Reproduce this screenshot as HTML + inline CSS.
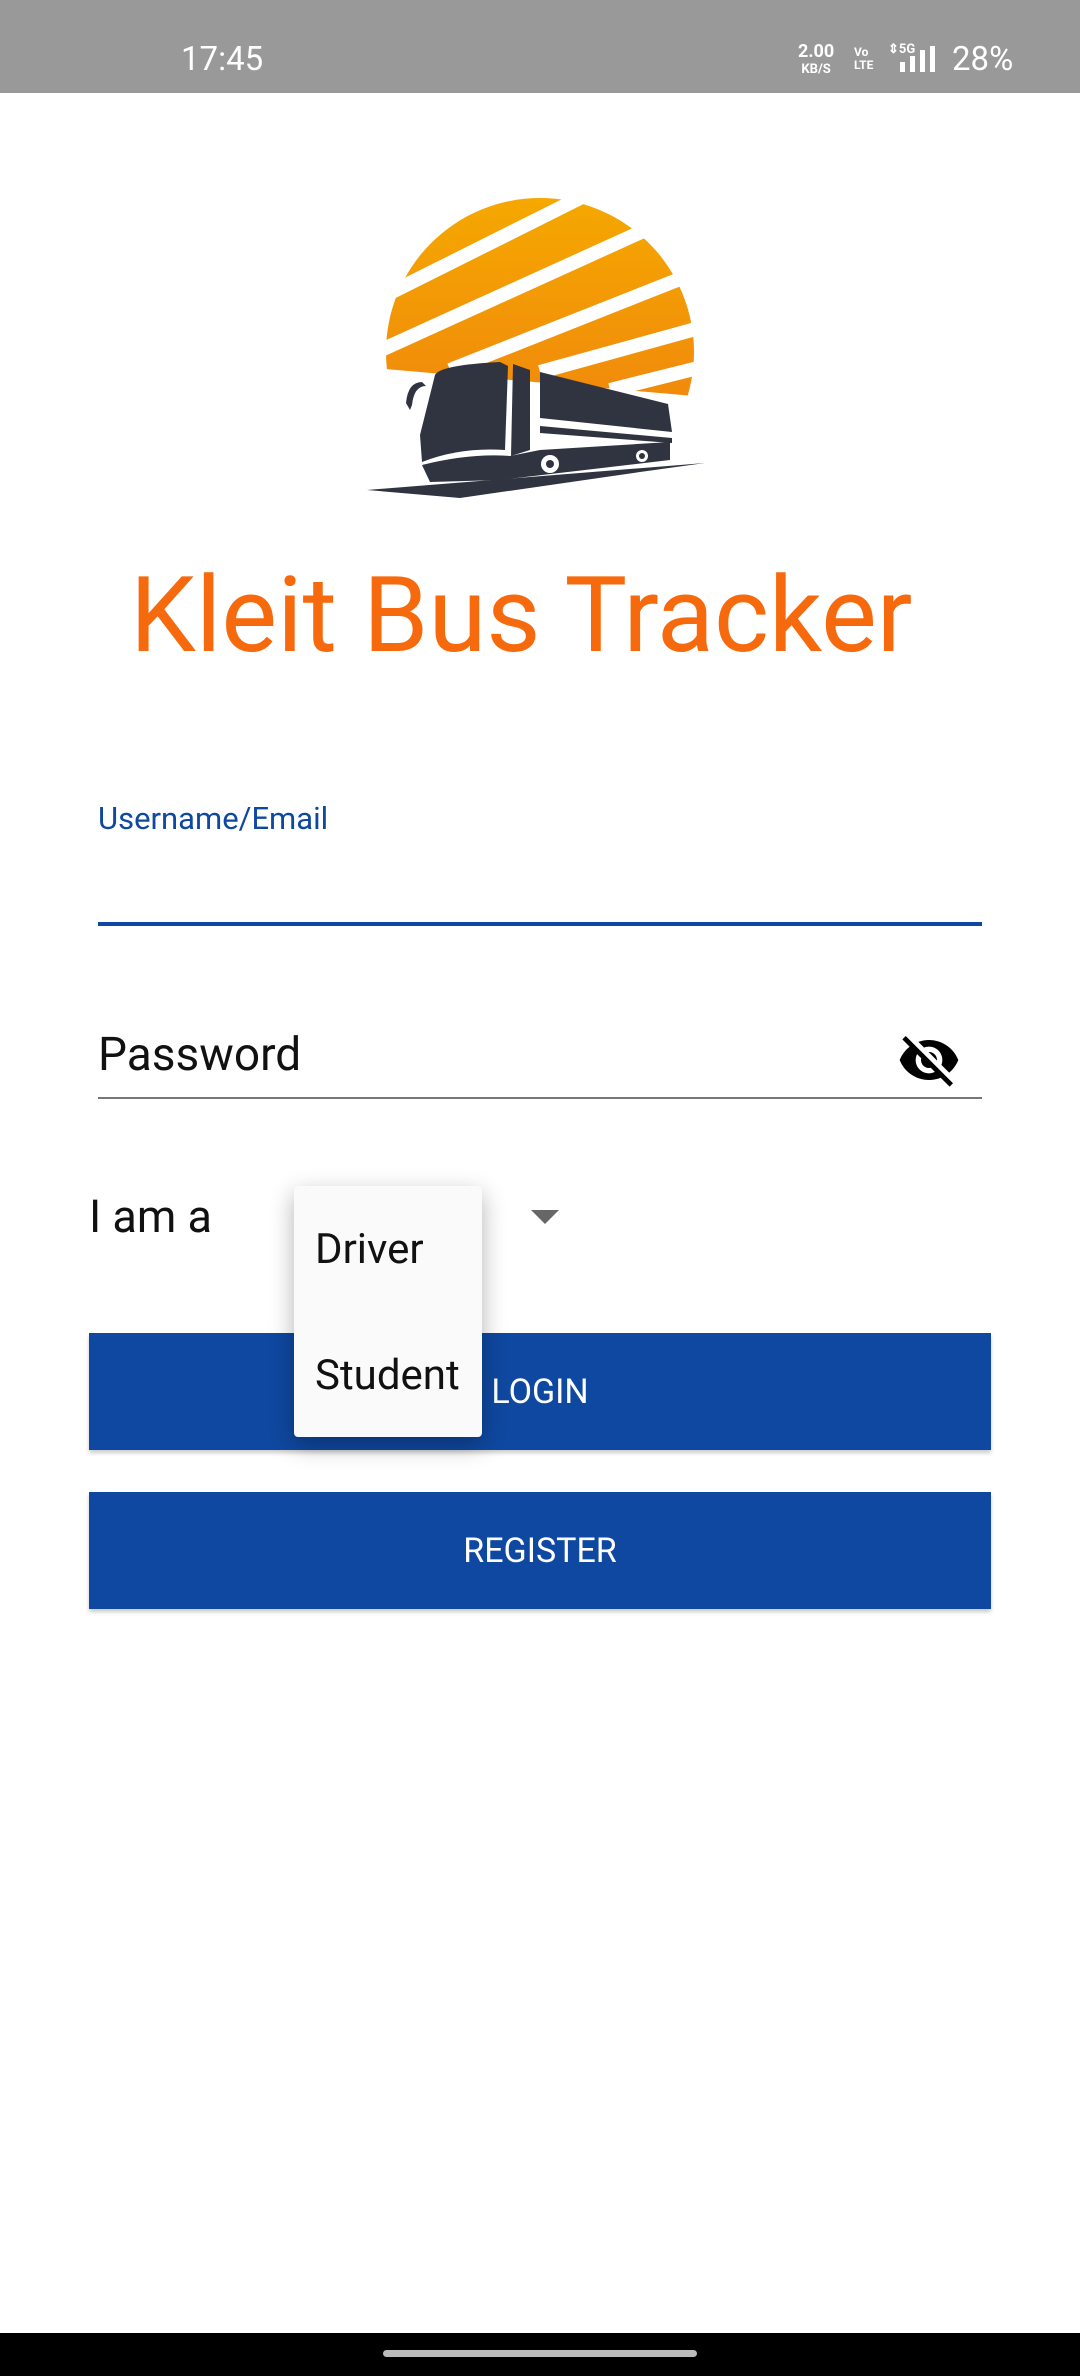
<!DOCTYPE html>
<html><head><meta charset="utf-8"><style>
*{margin:0;padding:0;box-sizing:border-box}
body{width:1080px;height:2376px;background:#fff;position:relative;overflow:hidden;font-family:"Roboto","Liberation Sans",sans-serif}
.a{position:absolute}
.status{left:0;top:0;width:1080px;height:93px;background:#999}
.btn{left:89px;width:902px;height:117px;background:#0f48a0;color:#fff;font-size:34px;display:flex;align-items:center;justify-content:center;box-shadow:0 3px 4px rgba(0,0,0,.2)}
</style></head><body>
<div class="a status"></div>
<div class="a" style="left:181px;top:40px;color:#fff;font-size:33px;">17:45</div>
<div class="a" style="left:798px;top:44px;color:#fff;font-size:18px;font-weight:bold;line-height:16px;text-align:center">2.00<br><span style="font-size:13px">KB/S</span></div>
<div class="a" style="left:854px;top:46px;color:#fff;font-size:12px;font-weight:bold;line-height:13px">Vo<br>LTE</div>
<div class="a" style="left:888px;top:42px;color:#fff;font-size:13px;font-weight:bold">⇕5G</div>
<svg class="a" style="left:898px;top:46px" width="46" height="28"><rect x="2" y="16" width="5" height="10" fill="#fff"/><rect x="12" y="10" width="5" height="16" fill="#fff"/><rect x="22" y="4" width="5" height="22" fill="#fff"/><rect x="32" y="0" width="5" height="26" fill="#fff"/></svg>
<div class="a" style="left:952px;top:40px;color:#fff;font-size:33px;">28%</div>

<svg class="a" style="left:340px;top:160px" width="400" height="350" viewBox="0 0 400 350">
<defs><linearGradient id="g" x1="0" y1="0" x2="0" y2="1"><stop offset="0" stop-color="#f5a800"/><stop offset="1" stop-color="#ee7a12"/></linearGradient>
<clipPath id="c"><polygon points="0,0 400,0 400,240 0,205"/></clipPath></defs>
<g clip-path="url(#c)"><circle cx="200" cy="192" r="154" fill="url(#g)"/></g>
<g stroke="#fff" stroke-width="14" stroke-linecap="butt">
<line x1="40" y1="138" x2="240" y2="38"/>
<line x1="30" y1="195" x2="310" y2="68"/>
<line x1="110" y1="210" x2="350" y2="115"/>
<line x1="200" y1="212" x2="370" y2="165"/>
<line x1="270" y1="230" x2="370" y2="205"/>
</g>
<g fill="#2f3440">
<path d="M95,215 Q100,205 160,202 L168,206 L165,290 Q120,287 82,302 L80,275 Z"/>
<path d="M173,204 L190,210 L190,290 L171,296 Z"/>
<path d="M200,212 L328,244 L332,272 L200,258 Z"/>
<path d="M200,266 L332,278 L332,283 L200,273 Z"/>
<path d="M66,243 Q68,222 82,222 L86,226 Q74,226 72,245 L70,250 Z"/>
<path d="M27,330 L365,303 L300,312 L120,338 Z"/>
<path d="M82,305 Q130,293 170,296 L200,290 L330,282 L330,300 L160,320 L90,322 Z"/>
</g>
<g fill="#fff"><circle cx="210" cy="304" r="9"/><circle cx="302" cy="296" r="6"/></g>
<g fill="#2f3440"><circle cx="210" cy="304" r="4"/><circle cx="302" cy="296" r="3"/></g>
</svg>

<div class="a" style="left:130px;top:554px;font-size:105px;color:#f7690d;white-space:nowrap">Kleit Bus Tracker</div>

<div class="a" style="left:98px;top:800px;font-size:31px;color:#0f48a0">Username/Email</div>
<div class="a" style="left:98px;top:922px;width:884px;height:4px;background:#0f48a0"></div>

<div class="a" style="left:98px;top:1028px;font-size:46px;color:#111">Password</div>
<div class="a" style="left:98px;top:1097px;width:884px;height:2px;background:#777"></div>
<svg class="a" style="left:897px;top:1028px" width="64" height="64" viewBox="0 0 24 24"><path d="M12 7c2.76 0 5 2.24 5 5 0 .65-.13 1.26-.36 1.83l2.92 2.92c1.51-1.26 2.7-2.89 3.43-4.750-1.730-4.390-6-7.500-11-7.500-1.4 0-2.740.250-3.980.700l2.160 2.160C10.74 7.130 11.350 7 12 7zM2 4.270l2.280 2.280.460.460C3.080 8.300 1.780 10.020 1 12c1.730 4.390 6 7.500 11 7.500 1.550 0 3.030-.300 4.380-.840l.420.420L19.730 22 21 20.730 3.270 3 2 4.270zM7.530 9.800l1.550 1.550c-.050.210-.080.430-.080.650 0 1.660 1.340 3 3 3 .220 0 .440-.030.650-.080l1.550 1.550c-.670.330-1.410.530-2.200.530-2.760 0-5-2.240-5-5 0-.790.200-1.530.530-2.200zm4.310-.780l3.150 3.150.020-.160c0-1.660-1.340-3-3-3l-.170.010z" fill="#000"/></svg>

<div class="a" style="left:89px;top:1190px;font-size:45px;color:#111">I am a</div>
<svg class="a" style="left:531px;top:1210px" width="28" height="16"><polygon points="0,0 28,0 14,14" fill="#666"/></svg>

<div class="a btn" style="top:1333px">LOGIN</div>
<div class="a btn" style="top:1492px">REGISTER</div>

<div class="a" style="left:294px;top:1186px;width:188px;height:251px;background:#fafafa;border-radius:4px;box-shadow:0 8px 24px rgba(0,0,0,.3)"></div>
<div class="a" style="left:315px;top:1225px;font-size:42px;color:#111">Driver</div>
<div class="a" style="left:315px;top:1351px;font-size:42px;color:#111">Student</div>

<div class="a" style="left:0;top:2333px;width:1080px;height:43px;background:#000"></div>
<div class="a" style="left:383px;top:2350px;width:314px;height:7px;border-radius:4px;background:#bbb"></div>
</body></html>
